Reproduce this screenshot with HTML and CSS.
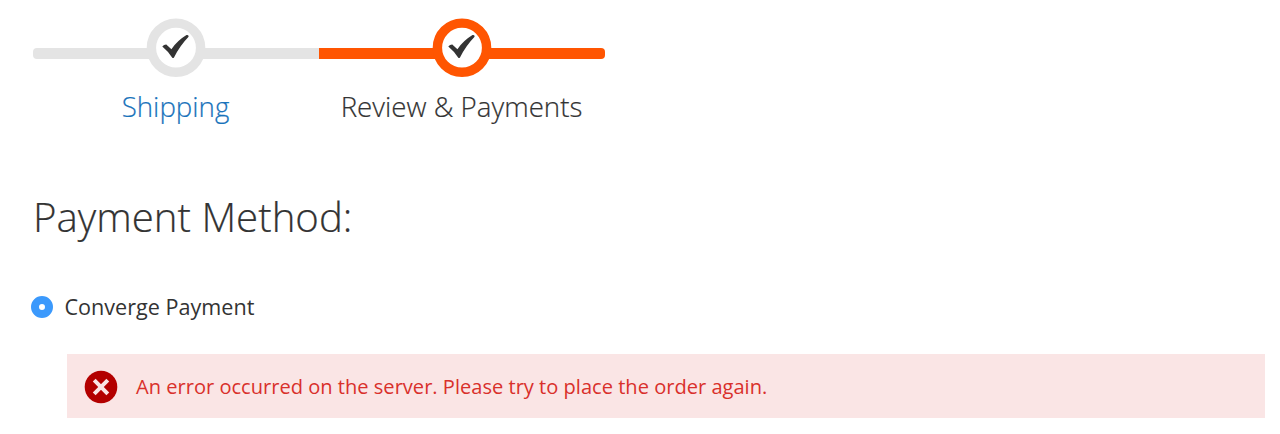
FILE: index.html
```html
<!DOCTYPE html>
<html lang="en">
<head>
<meta charset="utf-8">
<title>Checkout</title>
<link rel="stylesheet" href="styles.css">
</head>
<body>
<main class="checkout">
  <ol class="progress">
    <li class="step">
      <div class="track"><svg class="badge" viewBox="0 0 60 60"><circle class="ring" cx="30" cy="29.7" r="24.6"/><path class="check" d="M16.3 28.4Q18 26.3 20.3 26.4L25.4 31.2Q31.5 22.5 40.5 17.1Q42.8 16.5 42.6 18.7Q34 27.5 28 39.4Q27.1 40.7 26.1 39.6Q22 33 16.3 28.4Z"/></svg></div>
      <a class="label shipping">Shipping</a>
    </li>
    <li class="step active">
      <div class="track"><svg class="badge" viewBox="0 0 60 60"><circle class="ring" cx="30" cy="29.7" r="24.6"/><path class="check" d="M16.3 28.4Q18 26.3 20.3 26.4L25.4 31.2Q31.5 22.5 40.5 17.1Q42.8 16.5 42.6 18.7Q34 27.5 28 39.4Q27.1 40.7 26.1 39.6Q22 33 16.3 28.4Z"/></svg></div>
      <span class="label review">Review &amp; Payments</span>
    </li>
  </ol>
  <h1 class="title">Payment Method:</h1>
  <div class="method">
    <span class="radio"></span>
    <span class="method-name">Converge Payment</span>
  </div>
  <div class="error">
    <svg class="error-icon" viewBox="0 0 34 34"><circle cx="17" cy="17" r="16.3" fill="#b30000"/><path d="M10.2 10.2L23.8 23.8M23.8 10.2L10.2 23.8" stroke="#fae5e5" stroke-width="4"/></svg>
    <span class="error-text">An error occurred on the server. Please try to place the order again.</span>
  </div>
</main>
</body>
</html>
```
FILE: styles.css
```css
body {
  margin: 0;
  background: #fff;
  color: #333;
  font-family: "Open Sans", sans-serif;
}
.checkout {
  height: 434px;
  overflow: hidden;
}
.progress {
  display: flex;
  width: 572px;
  margin: 0 0 0 32.5px;
  padding: 18px 0 0;
  list-style: none;
}
.step {
  width: 286px;
  display: flex;
  flex-direction: column;
  align-items: center;
  color: #e4e4e4;
}
.step.active {
  color: #ff5501;
}
.track {
  width: 100%;
  height: 60px;
  display: flex;
  justify-content: center;
}
.track::before,
.track::after {
  content: "";
  flex: 1;
  height: 11px;
  margin-top: 30px;
  background: currentColor;
}
.step:first-child .track::before {
  border-radius: 4px 0 0 4px;
}
.step:last-child .track::after {
  border-radius: 0 4px 4px 0;
}
.badge {
  width: 60px;
  height: 60px;
  margin: 0 -3px;
}
.ring {
  fill: #fff;
  stroke: currentColor;
  stroke-width: 9.4;
}
.check {
  fill: #333;
}
.label {
  margin-top: 8px;
  font-size: 27.7px;
  line-height: 40px;
  font-weight: 300;
  color: #333;
  white-space: nowrap;
  -webkit-text-stroke: 0.2px currentColor;
}
.label.shipping {
  color: #1973bb;
}
.title {
  margin: 63px 0 0 33px;
  font-size: 40.2px;
  line-height: 56px;
  font-weight: 300;
  -webkit-text-stroke: 0.2px currentColor;
}
.method {
  display: flex;
  align-items: center;
  gap: 11.5px;
  height: 32px;
  margin: 46px 0 0 31px;
}
.radio {
  box-sizing: border-box;
  width: 22px;
  height: 22px;
  border: 8px solid #3b99fc;
  border-radius: 50%;
  background: #fff;
}
.method-name {
  font-size: 21.6px;
  line-height: 32px;
}
.error {
  display: flex;
  align-items: center;
  gap: 18px;
  box-sizing: border-box;
  height: 64px;
  margin: 31px 15.5px 0 67px;
  padding: 1px 0 0 17px;
  background: #fae5e5;
  color: #d9302b;
}
.error-icon {
  width: 34px;
  height: 34px;
}
.error-text {
  font-size: 20.08px;
  line-height: 30px;
}
```
